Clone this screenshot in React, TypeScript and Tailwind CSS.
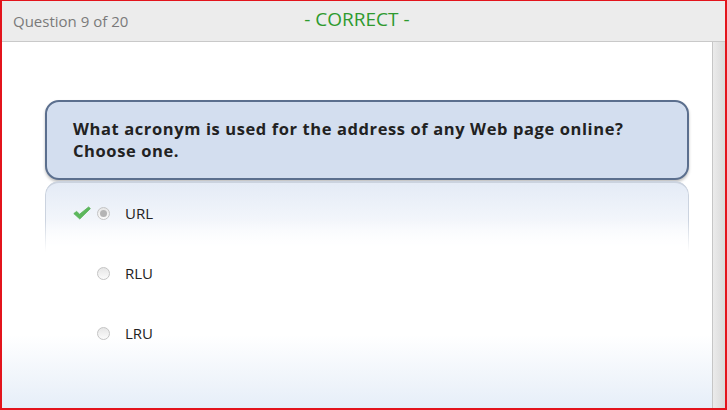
const options = [
  { label: "URL", selected: true },
  { label: "RLU", selected: false },
  { label: "LRU", selected: false },
];

function Radio({ selected }: { selected: boolean }) {
  return (
    <span className="w-[13px] h-[13px] rounded-full border border-[#c4c4c4] bg-gradient-to-b from-[#e6e6e6] to-[#fbfbfb] flex items-center justify-center">
      {selected && <span className="w-[7px] h-[7px] rounded-full bg-[#b4b4b4]" />}
    </span>
  );
}

function Check() {
  return (
    <svg width="18" height="14" viewBox="0 0 18 14">
      <path
        d="M0.8 7.6 L3.6 5.4 L6.6 8.2 L15.6 1 L17.4 2.6 L6.8 13 Z"
        fill="#5cb85c"
        stroke="#56b056"
        strokeWidth="0.8"
        strokeLinejoin="round"
      />
    </svg>
  );
}

export default function App() {
  return (
    <div
      className="w-[727px] h-[410px] border-t border-x-2 border-b-2 border-[#e3141c] flex flex-col overflow-hidden"
      style={{ fontFamily: '"Open Sans", "Liberation Sans", sans-serif' }}
    >
      <header className="h-[41px] shrink-0 bg-[#ececec] border-b border-[#c9c9c9] flex items-center pl-[11px] pb-[1px]">
        <span className="text-[15px] text-[#7a7a7a] mt-[1px]">Question 9 of 20</span>
        <span className="ml-[176px] -mt-[3px] text-[19px] text-[#2e9a2e]">- CORRECT -</span>
      </header>

      <div className="flex-1 flex">
        <main className="flex-1 bg-gradient-to-b from-white from-[80%] to-[#e6eef8] border-r border-[#c6c6c6] pt-[58px] pl-[43px] pr-[23px]">
          <div className="h-[80px] rounded-[14px] border-2 border-[#5b6f8e] bg-[#d3deef] shadow-[0_2px_3px_rgba(0,0,0,0.25)] flex flex-col justify-center pl-[26px]">
            <p className="text-[16.5px] leading-[22px] font-bold tracking-[0.6px] text-[#222]">
              What acronym is used for the address of any Web page online?
              <br />
              Choose one.
            </p>
          </div>

          <div className="mt-[3px] flex flex-col">
            {options.map((o) => (
              <div key={o.label} className="relative h-[60px] flex items-center">
                {o.selected && (
                  <div className="absolute left-0 right-0 top-[-2px] h-[71px] rounded-t-[14px] border-t-2 border-x border-[#cbd3df] bg-gradient-to-b from-[#e4ebf6] to-white [mask-image:linear-gradient(to_bottom,black_55%,transparent)]" />
                )}
                <span className="relative w-[52px] flex justify-end pr-[6px]">
                  {o.selected && <Check />}
                </span>
                <span className="relative">
                  <Radio selected={o.selected} />
                </span>
                <span className="relative ml-[15px] text-[15px] text-[#222]">{o.label}</span>
              </div>
            ))}
          </div>
        </main>
        <div className="w-[12px] bg-gradient-to-r from-[#ebebeb] to-[#d9d9d9]" />
      </div>
    </div>
  );
}
